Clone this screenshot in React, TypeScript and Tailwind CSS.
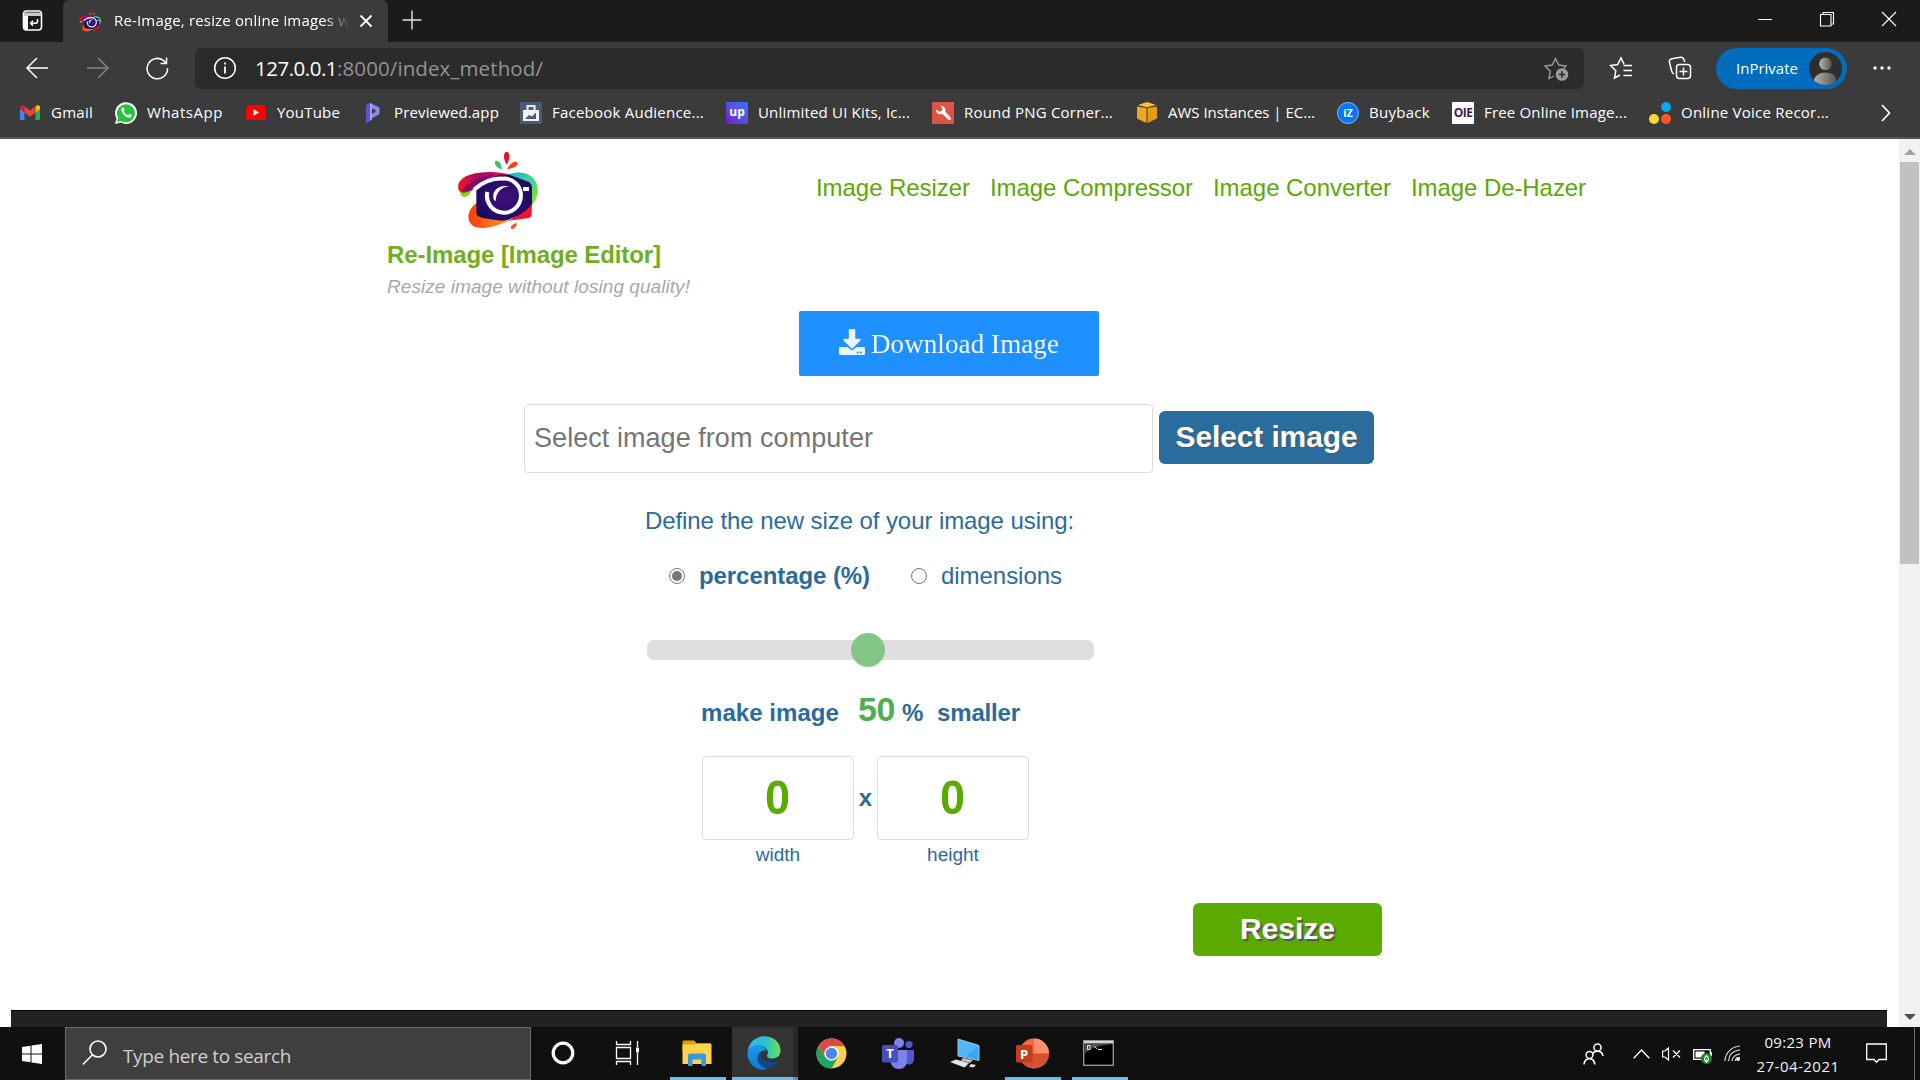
import { useLayoutEffect, useRef, useState, type ReactNode } from "react";
import { FaDownload } from "react-icons/fa";

/* Text tracked so that it fills a given width. */
function Fit({ w, className = "", children }: { w: number; className?: string; children: string }) {
  const ref = useRef<HTMLSpanElement>(null);
  const [spacing, setSpacing] = useState(0);
  useLayoutEffect(() => {
    if (!ref.current) return;
    ref.current.style.letterSpacing = "0px";
    const natural = ref.current.getBoundingClientRect().width;
    const next = (w - natural) / children.length;
    ref.current.style.letterSpacing = `${next}px`;
    setSpacing(next);
  }, [w, children]);
  return (
    <span ref={ref} className={`inline-block shrink-0 whitespace-pre ${className}`} style={{ letterSpacing: `${spacing}px` }}>
      {children}
    </span>
  );
}

function CameraLogo({ className }: { className: string }) {
  return (
    <svg viewBox="51 18 243 240" preserveAspectRatio="none" className={className}>
      <defs>
        <linearGradient id="swoosh" x1="0" x2="1">
          <stop offset="0" stopColor="#f5131f" />
          <stop offset=".45" stopColor="#a8066e" />
          <stop offset="1" stopColor="#f0142c" />
        </linearGradient>
        <linearGradient id="teal" x1="0" x2=".6" y1="0" y2="1">
          <stop offset="0" stopColor="#16b7c6" />
          <stop offset=".6" stopColor="#49d98c" />
          <stop offset="1" stopColor="#8be01e" />
        </linearGradient>
        <linearGradient id="ember" x1="0" x2="1">
          <stop offset="0" stopColor="#fb3a12" />
          <stop offset="1" stopColor="#fba21a" />
        </linearGradient>
        <radialGradient id="navy" cx=".5" cy=".5" r=".6">
          <stop offset="0" stopColor="#43107c" />
          <stop offset="1" stopColor="#170a5e" />
        </radialGradient>
      </defs>
      <path d="M200 59C190 46 188 20 201 20C212 22 209 46 200 59Z" fill="#e3122b" />
      <path d="M185 73C170 70 161 56 166 48C176 44 187 60 185 73Z" fill="#3cc26a" />
      <path d="M202 74C205 60 222 46 232 52C236 66 215 68 202 74Z" fill="#f1441c" />
      <path d="M60 134C58 160 79 159 86 150C98 130 115 118 130 110Z" fill="#80d81c" />
      <path d="M205 88C250 72 290 92 293 130C295 152 286 170 270 188L262 120Z" fill="url(#teal)" />
      <path d="M55 132C50 108 72 90 112 84C150 78 185 82 206 88C165 95 126 112 100 133C86 143 60 150 55 132Z" fill="url(#swoosh)" />
      <path d="M66 136C80 116 120 92 165 88C145 98 120 112 98 131C88 139 74 142 66 136Z" fill="#6a0a72" opacity=".7" />
      <path d="M116 170C76 190 70 250 128 249C155 248 190 236 215 222L118 200Z" fill="url(#ember)" />
      <path d="M276 172L275 210Q274 218 262 220L205 227Q250 205 276 172Z" fill="#f3122a" />
      <path d="M109 127Q150 88 205 88L268 112Q276 118 276 130L276 176C252 208 215 224 184 227L128 219Q109 214 109 204Z" fill="url(#navy)" />
      <path d="M102 134C134 106 160 99 188 101A51 51 0 1 1 142 141" fill="none" stroke="#fff" strokeWidth="12" />
      <path d="M162 166C152 136 178 118 207 124C184 126 168 142 167 168Z" fill="#fff" />
      <rect x="249" y="126" width="18" height="12" fill="#fff" />
      <path d="M212 250C212 240 222 236 231 234C229 246 220 256 212 250Z" fill="#f4581a" />
    </svg>
  );
}

function TabStrip() {
  return (
    <div className="flex h-[42px] items-start bg-[#1b1b1b]">
      <div className="flex h-[42px] w-[63px] items-center pl-[22px]">
        <svg width="22" height="22" viewBox="0 0 22 22" fill="none">
          <rect x="1.5" y="1" width="18" height="19" rx="3" stroke="#fff" strokeWidth="1.6" />
          <path d="M2 2.5h17v3.5H2z" fill="#c9c9c9" />
          <path d="M2 6h4v13.5H3.5L2 18z" fill="#fff" />
          <path d="M15.5 9v2.2c0 1.4-.8 2-2 2H8.800M11 10.800l-2.400 2.400 2.400 2.400" stroke="#fff" strokeWidth="1.6" />
        </svg>
      </div>
      <div className="flex h-[42px] w-[325px] items-center rounded-t-[6px] bg-[#3b3b3b] pl-[16px]">
        <CameraLogo className="h-[22px] w-[22px]" />
        <div className="ml-[13px] w-[236px] overflow-hidden pb-[3px] text-[15px] leading-5 text-white [mask-image:linear-gradient(to_right,black_210px,transparent_236px)]">
          <Fit w={236}>Re-Image, resize online images w</Fit>
        </div>
        <svg width="14" height="14" viewBox="0 0 14 14" className="ml-[9px]" stroke="#fff" strokeWidth="1.8">
          <path d="M1.500 1.500l11 11M12.500 1.500l-11 11" />
        </svg>
      </div>
      <svg width="20" height="20" viewBox="0 0 20 20" className="mt-[10px] ml-[14px]" stroke="#e6e6e6" strokeWidth="1.4">
        <path d="M10 .5v19M.5 10h19" />
      </svg>
      <div className="ml-auto flex gap-[46px] pt-[11px] pr-[23px]">
        <svg width="16" height="16" viewBox="0 0 16 16" stroke="#fff" strokeWidth="1"><path d="M1 8.500h14" /></svg>
        <svg width="16" height="16" viewBox="0 0 16 16" fill="none" stroke="#fff" strokeWidth="1.1">
          <path d="M1.500 3.500h10.500v11.500H1.500zM4 3.500V1.500h10.500v11.500H12" />
        </svg>
        <svg width="16" height="16" viewBox="0 0 16 16" stroke="#fff" strokeWidth="1.200"><path d="M1 1l14 14M15 1L1 15" /></svg>
      </div>
    </div>
  );
}

function AddressRow() {
  return (
    <div className="flex h-[53px] items-center pb-px">
      <svg width="24" height="24" viewBox="0 0 24 24" fill="none" stroke="#fff" strokeWidth="1.500" className="ml-[25px]">
        <path d="M12 2L2 12l10 10M2 12h21" />
      </svg>
      <svg width="24" height="24" viewBox="0 0 24 24" fill="none" stroke="#858585" strokeWidth="1.500" className="ml-[36px]">
        <path d="M13 2l10 10-10 10M23 12H2" />
      </svg>
      <svg width="24" height="24" viewBox="0 0 24 24" fill="none" stroke="#fff" strokeWidth="1.500" className="ml-[36px]">
        <path d="M22.500 12A10.200 10.200 0 1 1 18.500 4.500L21 7M21.500 1.500V7.500H15.500" />
      </svg>
      <div className="ml-[26px] flex h-[41px] w-[1389px] items-center rounded-[6px] bg-[#2b2b2b] pr-[15px] pl-[18px]">
        <svg width="24" height="24" viewBox="0 0 24 24" fill="none" stroke="#fff" strokeWidth="1.500">
          <circle cx="12" cy="12" r="10.300" />
          <path d="M12 10.500v7M12 6.500v2" strokeWidth="1.800" />
        </svg>
        <div className="mb-px ml-[18px] flex text-[20.500px] leading-6">
          <Fit w={82} className="text-white">127.0.0.1</Fit>
          <Fit w={206} className="text-[#939393]">:8000/index_method/</Fit>
        </div>
        <svg width="25" height="25" viewBox="0 0 25 25" fill="none" className="mt-[2px] ml-auto">
          <path d="M9.800 19L5 21.500 6.200 14.200 1 9 8.200 8 11.500 1.500 14.800 8 22 9 19.500 11.500" stroke="#9a9a9a" strokeWidth="1.400" />
          <circle cx="18" cy="17.500" r="6.300" fill="#9a9a9a" />
          <path d="M18 14.300v6.400M14.800 17.500h6.400" stroke="#2b2b2b" strokeWidth="1.600" />
        </svg>
      </div>
      <svg width="24" height="24" viewBox="0 0 24 24" fill="none" stroke="#fff" strokeWidth="1.500" className="ml-[25px]">
        <path d="M11 19L5.500 22 6.800 14.800 1.500 9.500 8.700 8.500 12 2 15 8.200M14.500 9.500H23M14.500 14.500H23M14.500 19.500H23" />
      </svg>
      <svg width="24" height="24" viewBox="0 0 24 24" fill="none" stroke="#fff" strokeWidth="1.500" className="ml-[35px]">
        <rect x="8.500" y="8.500" width="14" height="14" rx="3" />
        <path d="M15.500 11.500v8M11.500 15.500h8M6 18C4 17.500 3.800 16 3.500 14.500L1.500 6.500C1 4.500 2 3.200 4 2.800L12.500 1.200C14.500 1 15.300 1.800 16 3.500L16.700 6" />
      </svg>
      <div className="ml-[24px] flex h-[41px] w-[131px] items-center rounded-full bg-[#006cbe] pr-[5px] pl-[20px] text-[15px] leading-5 text-white">
        <Fit w={62}>InPrivate</Fit>
        <svg width="33" height="33" viewBox="0 0 33 33" className="ml-auto">
          <defs>
            <linearGradient id="avatar"><stop offset="0" stopColor="#b9b4b0" /><stop offset="1" stopColor="#55524f" /></linearGradient>
            <clipPath id="avatarClip"><circle cx="16.500" cy="16.500" r="16.500" /></clipPath>
          </defs>
          <circle cx="16.500" cy="16.500" r="16.500" fill="#302e2c" />
          <g clipPath="url(#avatarClip)" fill="url(#avatar)">
            <circle cx="16.500" cy="11.800" r="6.300" />
            <path d="M4 33C4 25 9 20.500 16.500 20.500S28 24 28 33Z" />
          </g>
        </svg>
      </div>
      <svg width="20" height="6" viewBox="0 0 20 6" fill="#fff" className="ml-[25px]">
        <circle cx="3" cy="3" r="1.700" /><circle cx="10" cy="3" r="1.700" /><circle cx="17" cy="3" r="1.700" />
      </svg>
    </div>
  );
}

function Bookmark({ icon, label, w, className }: { icon: ReactNode; label: string; w: number; className: string }) {
  return (
    <div className={`flex shrink-0 items-center ${className}`}>
      <div className="flex h-[22px] w-[22px] items-center justify-center">{icon}</div>
      <Fit w={w} className="mb-[2px] ml-[10px] text-white">{label}</Fit>
    </div>
  );
}

function BookmarksBar() {
  return (
    <div className="flex h-[44px] items-center border-b-2 border-[#555] pb-[7px] pl-[19px] text-[15px] leading-5">
      <Bookmark className="w-[96px]" label="Gmail" w={42} icon={
        <svg width="20" height="15" viewBox="0 0 20 15">
          <path d="M0 2v11.500Q0 15 1.500 15H4.500V6z" fill="#4285f4" />
          <path d="M20 2v11.500Q20 15 18.500 15H15.500V6z" fill="#34a853" />
          <path d="M15.500 7.500V1.200C17 0 20-.2 20 2.300V4z" fill="#fbbc04" />
          <path d="M0 4V2.300C0-.2 3-.2 4.500 1.200V7.500z" fill="#c5221f" />
          <path d="M4.500 1.200L10 5.400 15.500 1.200V7.500L10 11.700 4.500 7.500z" fill="#ea4335" />
        </svg>} />
      <Bookmark className="w-[130px]" label="WhatsApp" w={76} icon={
        <svg width="22" height="22" viewBox="0 0 22 22">
          <path d="M0 22L1.500 16.500A11 10.900 0 1 1 5.700 20.600Z" fill="#fff" />
          <path d="M2 20L3.200 16A9 9 0 1 1 6 18.900Z" fill="#25c33c" />
          <path d="M7.500 5.500C6 6.500 5.800 8.500 7.500 11c2 3 4.500 4.800 7 4.800 1.500-.2 2.400-1.200 2.300-2.700l-2.600-1.300-1.300 1.500c-2-.8-3.300-2-4.200-4l1-1.200-1-2.500Z" fill="#fff" />
        </svg>} />
      <Bookmark className="w-[117px]" label="YouTube" w={63} icon={
        <svg width="20" height="15" viewBox="0 0 20 15"><rect width="20" height="15" rx="3" fill="#f00" /><path d="M7.500 4.300v6.400l5.500-3.200z" fill="#fff" /></svg>} />
      <Bookmark className="w-[158px]" label="Previewed.app" w={105} icon={
        <svg width="18" height="22" viewBox="0 0 18 22">
          <path d="M2 3l4-2v18l-4 2.500z" fill="#5d56c9" />
          <path d="M6 1l9.500 4.500V12L6 17.500v-4.500l5.500-3V8L6 5.500z" fill="#8f86f0" />
          <path d="M6 1v18l2-1.500V2z" fill="#a79ff8" />
        </svg>} />
      <Bookmark className="w-[206px]" label="Facebook Audience..." w={152} icon={
        <svg width="22" height="22" viewBox="0 0 22 22">
          <rect width="22" height="22" fill="#4c5a75" />
          <rect x="3" y="8" width="16" height="11" fill="#f1f2f5" />
          <path d="M7.500 8V4h7v4" fill="none" stroke="#e4e7ec" strokeWidth="2.200" />
          <path d="M5 17l4-4 3 1.500 4-4V17z" fill="#4c5a75" />
        </svg>} />
      <Bookmark className="w-[206px]" label="Unlimited UI Kits, Ic..." w={152} icon={
        <div className="flex h-[22px] w-[22px] items-center justify-center bg-linear-to-tr from-[#6a11cb] to-[#2575fc] pb-px text-[12px] leading-none font-bold text-white">up</div>} />
      <Bookmark className="w-[204px]" label="Round PNG Corner..." w={149} icon={
        <svg width="22" height="22" viewBox="0 0 22 22">
          <rect width="22" height="22" fill="#e05243" />
          <path d="M4 7.500l3 2 3-.5.300-3L8.500 4C11 3.500 14 5.500 13.300 9.500L19 16c.5 1.500-1 2.800-2.500 2L10.500 12C6.500 13 3.500 10.500 4 7.500z" fill="#fff" />
        </svg>} />
      <Bookmark className="w-[201px]" label="AWS Instances | EC..." w={147} icon={
        <svg width="20" height="21" viewBox="0 0 20 21">
          <path d="M0 4.500L9.500 6v15L0 16.500z" fill="#f0a91f" />
          <path d="M20 4.500L10.500 6v15L20 16.500z" fill="#e59a14" />
          <path d="M10 0l9 3-9 2.200L1 3z" fill="#ffc233" />
        </svg>} />
      <Bookmark className="w-[115px]" label="Buyback" w={61} icon={
        <div className="flex h-[22px] w-[22px] items-center justify-center rounded-full border border-[#7fb8ff] bg-[#0a75f5] text-[11px] leading-none font-bold text-white">iZ</div>} />
      <Bookmark className="w-[197px]" label="Free Online Image..." w={143} icon={
        <div className="flex h-[22px] w-[22px] items-center justify-center overflow-hidden bg-white text-[12px] leading-none font-bold tracking-[-0.5px] text-[#3a1f4d]">OIE</div>} />
      <Bookmark className="w-[232px]" label="Online Voice Recor..." w={148} icon={
        <svg width="22" height="22" viewBox="0 0 22 22">
          <circle cx="17" cy="5" r="5" fill="#03a9f4" /><circle cx="5" cy="17" r="5" fill="#fdd835" /><circle cx="17" cy="17" r="5" fill="#ff5722" />
        </svg>} />
      <svg width="10" height="18" viewBox="0 0 10 18" fill="none" stroke="#fff" strokeWidth="1.700"><path d="M1 1l7.500 8L1 17" /></svg>
    </div>
  );
}

function Scrollbar() {
  return (
    <div className="flex w-[21px] flex-col items-center bg-[#f1f1f1]">
      <svg width="12" height="6" viewBox="0 0 12 6" className="mt-[10px]"><path d="M6 0l6 6H0z" fill="#a3a3a3" /></svg>
      <div className="mt-[7px] h-[402px] w-[19px] bg-[#c1c1c1]" />
      <svg width="12" height="6" viewBox="0 0 12 6" className="mt-auto mb-[7px]"><path d="M6 6L0 0h12z" fill="#505050" /></svg>
    </div>
  );
}

function SizeBox({ label }: { label: string }) {
  return (
    <div className="flex w-[152px] flex-col items-center">
      <div className="flex h-[84px] w-full items-center justify-center rounded-[4px] border border-[#dcdcdc] pb-[2px] text-[49px] leading-none font-bold text-[#5aaa00]">
        <span className="inline-block scale-x-92">0</span>
      </div>
      <div className="mt-[3px] text-[19px] leading-6 text-[#2b6a9c]">{label}</div>
    </div>
  );
}

function Page() {
  return (
    <div className="flex h-[888px] bg-white font-['Liberation_Sans',Arial,sans-serif]">
      <main className="flex w-[1899px] flex-col text-[24px] leading-7 text-[#2b6a9c]">
        <header className="flex h-[160px] pl-[387px]">
          <div className="w-[429px] pt-[12px]">
            <CameraLogo className="ml-[70px] h-[80px] w-[81px]" />
            <div className="mt-[10px] text-[#6fae1e]"><Fit w={274} className="font-bold">Re-Image [Image Editor]</Fit></div>
            <div className="mt-[6px] text-[19px] leading-6 text-[#a8a8a8] italic"><Fit w={303}>Resize image without losing quality!</Fit></div>
          </div>
          <nav className="flex gap-[20px] pt-[35px] text-[#5aaa00]">
            <Fit w={154}>Image Resizer</Fit>
            <Fit w={203}>Image Compressor</Fit>
            <Fit w={178}>Image Converter</Fit>
            <Fit w={175}>Image De-Hazer</Fit>
          </nav>
        </header>
        <button className="mt-[12px] ml-[799px] flex h-[65px] w-[300px] items-center rounded-[2px] bg-[#1e90ff] pl-[40px] font-['Liberation_Serif',serif] text-[27px] leading-8 text-white">
          <FaDownload className="mb-[3px] h-[26px] w-[26px] opacity-90" />
          <Fit w={188} className="mt-px ml-[6px] opacity-95">Download Image</Fit>
        </button>
        <div className="mt-[28px] ml-[524px] flex h-[69px] items-center gap-[6px]">
          <div className="flex h-[69px] w-[629px] items-center rounded-[4px] border border-[#dcdcdc] pb-px pl-[9px] text-[27px] leading-8 text-[#757575]">
            <Fit w={339}>Select image from computer</Fit>
          </div>
          <button className="mb-[2px] flex h-[53px] w-[215px] items-center justify-center rounded-[6px] bg-[#2b6c9f] pb-px text-[30px] leading-9 font-bold text-white [text-shadow:1px_1px_1px_#555]">
            <Fit w={182}>Select image</Fit>
          </button>
        </div>
        <div className="mt-[34px] ml-[645px]"><Fit w={429}>Define the new size of your image using:</Fit></div>
        <div className="mt-[27px] ml-[669px] flex items-center">
          <div className="mb-px flex h-4 w-4 items-center justify-center rounded-full border border-[#767676]"><div className="h-[10px] w-[10px] rounded-full bg-[#767676]" /></div>
          <Fit w={171} className="ml-[14px] font-bold">percentage (%)</Fit>
          <div className="mb-px ml-[41px] h-4 w-4 rounded-full border border-[#767676]" />
          <Fit w={121} className="ml-[14px]">dimensions</Fit>
        </div>
        <div className="mt-[43px] ml-[647px] flex h-[34px] w-[447px] items-center">
          <div className="flex h-[20px] w-full items-center rounded-[7px] bg-[#dfdfdf] pl-[204px]">
            <div className="h-[34px] w-[34px] shrink-0 rounded-full bg-[#83c786]" />
          </div>
        </div>
        <div className="mt-[22px] ml-[701px] flex h-[40px] items-baseline font-bold">
          <Fit w={138}>make image</Fit>
          <Fit w={37} className="ml-[19px] text-[34px] leading-10 text-[#4caf50]">50</Fit>
          <Fit w={21} className="ml-[7px]">%</Fit>
          <Fit w={83} className="ml-[14px]">smaller</Fit>
        </div>
        <div className="mt-[27px] ml-[702px] flex">
          <SizeBox label="width" />
          <div className="mt-[28px] w-[23px] text-center font-bold">x</div>
          <SizeBox label="height" />
        </div>
        <button className="mt-[36px] ml-[1193px] flex h-[53px] w-[189px] items-center justify-center rounded-[6px] bg-[#5aaa00] pb-[2px] text-[30px] leading-9 font-bold text-white [text-shadow:2px_2px_1px_#555]">
          <Fit w={95}>Resize</Fit>
        </button>
        <footer className="mt-auto ml-[11px] h-[17px] w-[1876px] border-t border-black bg-[#222]" />
      </main>
      <Scrollbar />
    </div>
  );
}

function TaskButton({ className, icon, open }: { className: string; icon: ReactNode; open?: boolean }) {
  return (
    <div className={`flex h-[53px] flex-col items-center ${className}`}>
      <div className="flex h-[50px] items-center justify-center pt-[2px]">{icon}</div>
      {open && <div className="h-[3px] w-full bg-[#76b9ed]" />}
    </div>
  );
}

function Taskbar() {
  return (
    <div className="flex h-[53px] bg-[#101010] text-[#f2f2f2]">
      <div className="flex w-[65px] items-center pl-[22px]">
        <svg width="20" height="20" viewBox="0 0 20 20" fill="#fff">
          <path d="M0 3l8.500-1.300v7.800H0zM9.500 1.500L20 0v9.500H9.500zM0 10.500h8.500v7.800L0 17zM9.500 10.500H20V20L9.500 18.500z" />
        </svg>
      </div>
      <div className="flex w-[466px] items-center border border-[#6a6a6a] bg-[#3f3f3f] pl-[16px]">
        <svg width="26" height="26" viewBox="0 0 26 26" fill="none" stroke="#fff" strokeWidth="1.600" className="mb-[1px]">
          <circle cx="16" cy="9" r="8" /><path d="M10.500 14.800L.8 24.500" />
        </svg>
        <Fit w={168} className="mt-[4px] ml-[15px] text-[19px] leading-6 text-[#cfcfcf]">Type here to search</Fit>
      </div>
      <TaskButton className="w-[64px]" icon={
        <svg width="24" height="24" viewBox="0 0 24 24"><circle cx="12" cy="12" r="9.800" fill="none" stroke="#fff" strokeWidth="3.200" /></svg>} />
      <TaskButton className="ml-[1px] w-[64px]" icon={
        <svg width="26" height="24" viewBox="0 0 26 24" fill="none" stroke="#fff" strokeWidth="1.300">
          <path d="M1.500 6.500h14v11h-14zM1.500 0v3.500h14V0M1.500 24v-3.500h14V24M22.500 0v6M22.500 12v12" /><path d="M21 6.500h3v5h-3z" fill="#fff" stroke="none" />
        </svg>} />
      <TaskButton open className="ml-[10px] w-[56px]" icon={
        <svg width="30" height="26" viewBox="0 0 30 26" className="mr-[2px]">
          <path d="M.5 2Q.5 .5 2 .5h10l3 3H29v8H.5z" fill="#e0a000" />
          <path d="M.5 4.500h12l2.500-1H28Q29.500 3.500 29.500 5v19H.5z" fill="#ffd24d" />
          <path d="M6 26V16q0-2.500 2.500-2.500h13q2.500 0 2.500 2.500v10h-4.500v-6.500h-9V26z" fill="#3a96dd" />
        </svg>} />
      <TaskButton open className="ml-[6px] w-[61px] bg-[#333]" icon={
        <svg width="34" height="34" viewBox="0 0 34 34" className="ml-[3px]">
          <defs>
            <linearGradient id="edgeTop"><stop offset="0" stopColor="#2fb4f0" /><stop offset=".55" stopColor="#2bc3d0" /><stop offset="1" stopColor="#6be24f" /></linearGradient>
            <linearGradient id="edgeLeft" x1="0" x2="0" y1="0" y2="1"><stop offset="0" stopColor="#1b9de2" /><stop offset="1" stopColor="#0f78d4" /></linearGradient>
          </defs>
          <path d="M.8 15C2 6 9 .3 17.500 .3 27 .3 33.500 7 33.500 14.500c0 5-3.500 8-8 8-4 0-6-1.800-5.500-3 1.500-2 1.200-4-.5-6.500C15 8 6 8 .8 15z" fill="url(#edgeTop)" />
          <path d="M.4 17C1 11 7 8.500 12 9.500c4 .5 7 3.500 7.500 5C13 14 11 19 11 22c0 5 4 9 9 11.300C9 35.500 0 27 .4 17z" fill="url(#edgeLeft)" />
          <path d="M14 15.500C9 19 9 26 14.500 30c5 4 12 2 16-4 .5-1-.3-1.500-1.200-1C24 28 15 26 14.300 19.500 14 17.500 14 16.500 14 15.500z" fill="#104a8e" />
        </svg>} />
      <div className="flex h-[53px] w-[5px] flex-col justify-end bg-[#292929]"><div className="h-[3px] bg-[#5d8fb5]" /></div>
      <TaskButton className="w-[66px]" icon={
        <svg width="31" height="31" viewBox="0 0 31 31">
          <circle cx="15.500" cy="15.500" r="15" fill="#fdd04b" />
          <path d="M2.500 8A15 15 0 0 0 15.500 30.500L22 19.300 9 19z" fill="#1fa463" />
          <path d="M2.500 8A15 15 0 0 1 28.500 8H15.500L9 19z" fill="#dd4b3e" />
          <circle cx="15.500" cy="15.500" r="7.200" fill="#fff" /><circle cx="15.500" cy="15.500" r="5.700" fill="#4a86f0" />
        </svg>} />
      <TaskButton className="w-[68px]" icon={
        <svg width="33" height="31" viewBox="0 0 33 31">
          <circle cx="27" cy="6.500" r="3.600" fill="#5059c9" /><circle cx="17" cy="5" r="5" fill="#7b83eb" />
          <path d="M22 12h10v9.500c0 3-2.500 5-5 5s-5-1-5-4z" fill="#5059c9" />
          <path d="M8.500 12H25v10.500C25 27.500 21.500 31 17 31s-8.500-3.500-8.500-8z" fill="#7b83eb" />
          <rect y="7" width="16" height="17.500" rx="1.500" fill="#4650b8" />
          <text x="8" y="20" textAnchor="middle" fontSize="13" fontWeight="700" fill="#fff">T</text>
        </svg>} />
      <TaskButton className="w-[66px]" icon={
        <svg width="30" height="30" viewBox="0 0 30 30">
          <path d="M8 1l21 6.500v15L8 18z" fill="#35a8f0" stroke="#cfd8de" strokeWidth=".8" />
          <path d="M8 1l21 6.500-14 12L8 18z" fill="#7accfa" opacity=".4" />
          <path d="M13 20l10 2-3 3-9-2.500z" fill="#b8c2c8" />
          <path d="M6 21.500l13 3.500-4.500 4.500L0 24z" fill="#dfe4e8" /><path d="M21 26l5 1-2.500 2.500-4.500-1z" fill="#dfe4e8" />
        </svg>} />
      <TaskButton open className="ml-[7px] w-[56px]" icon={
        <svg width="33" height="31" viewBox="0 0 33 31" className="mr-[2px]">
          <circle cx="18" cy="15.500" r="15" fill="#ed6c47" />
          <path d="M18 .5A15 15 0 0 1 33 15.500H18z" fill="#ff8f6b" /><path d="M3 15.500H33A15 15 0 0 1 3 15.500z" fill="#d35230" />
          <rect y="7" width="16.500" height="17.500" rx="1.500" fill="#c43e1c" />
          <text x="8.200" y="20.500" textAnchor="middle" fontSize="13" fontWeight="700" fill="#fff">P</text>
        </svg>} />
      <TaskButton open className="ml-[11px] w-[56px]" icon={
        <svg width="31" height="26" viewBox="0 0 31 26" className="mr-[4px]">
          <rect x=".7" y=".7" width="29.600" height="24.600" fill="#000" stroke="#8c9499" strokeWidth="1.400" />
          <path d="M1 1h29v2.500H1z" fill="#cfd4d6" /><path d="M1.500 4h27.500C18 5 6 8 1.500 14z" fill="#4a4a4a" />
          <path d="M4.500 5.500h2.500v4H4.500zM11 5.500l3 3.500M15 9.500h4" stroke="#e5e5e5" fill="none" />
        </svg>} />
      <div className="ml-auto flex h-[53px] w-[337px] items-center">
        <svg width="21" height="22" viewBox="0 0 21 22" fill="none" stroke="#fff" strokeWidth="1.500">
          <circle cx="14.500" cy="4.500" r="3.600" /><path d="M9.500 11.500C10 9 12 8.300 14.500 8.300S19.500 10 20 13" />
          <circle cx="6.500" cy="12" r="3.400" /><path d="M1 21.500c.3-3.500 2.500-5.800 5.500-5.800s5 2.300 5.300 5.800" />
        </svg>
        <svg width="17" height="10" viewBox="0 0 17 10" fill="none" stroke="#fff" strokeWidth="1.300" className="ml-[29px]"><path d="M.7 9.300L8.500 1l7.800 8.300" /></svg>
        <svg width="19" height="14" viewBox="0 0 19 14" fill="none" stroke="#fff" strokeWidth="1.200" className="ml-[12px]"><path d="M.6 4h2.400L6.500 1v12L3 10H.6zM11 3.500l7 7M18 3.500l-7 7" /></svg>
        <svg width="20" height="18" viewBox="0 0 20 18" className="mt-[5px] ml-[12px]">
          <path d="M.7 2.700h16.600v9.600H.7z" fill="none" stroke="#fff" strokeWidth="1.300" /><path d="M2.500 4.500h9v6h-9zM17.500 5h1.500v4h-1.500z" fill="#fff" />
          <circle cx="13.500" cy="11.500" r="5.500" fill="#0f8a1f" /><path d="M13.500 8.500q4 4 0 6.500-4-2.500 0-6.500zM13.500 12v4" fill="none" stroke="#fff" strokeWidth="1.100" />
        </svg>
        <svg width="17" height="17" viewBox="0 0 17 17" fill="none" stroke="#d0d0d0" strokeWidth="1.200" className="ml-[11px]">
          <path d="M.8 16C1.500 8 7 1.800 16 1M4.500 16C5 10 9 5.500 16 4.800M8 16C8.500 12 11 9.500 16 8.800" /><circle cx="14" cy="14" r="2" fill="#fff" stroke="none" /><path d="M11.300 16c0-2 2-3.500 4.700-3.500" />
        </svg>
        <div className="ml-[15px] flex w-[84px] flex-col items-center text-[15px] leading-6">
          <Fit w={67}>09:23 PM</Fit>
          <Fit w={83}>27-04-2021</Fit>
        </div>
        <svg width="21" height="22" viewBox="0 0 21 22" fill="none" stroke="#fff" strokeWidth="1.300" className="mb-px ml-[26px]"><path d="M.7 2h19.600v15.500H13l-2.500 2.800L8 17.500H.7z" /></svg>
        <div className="ml-[27px] h-full w-px bg-[#6b6b6b]" />
      </div>
    </div>
  );
}

export default function App() {
  return (
    <div className="h-[1080px] w-[1920px] overflow-hidden bg-[#3b3b3b] font-['Open_Sans','Noto_Sans',sans-serif]">
      <div className="h-[139px]">
        <TabStrip />
        <AddressRow />
        <BookmarksBar />
      </div>
      <Page />
      <Taskbar />
    </div>
  );
}
